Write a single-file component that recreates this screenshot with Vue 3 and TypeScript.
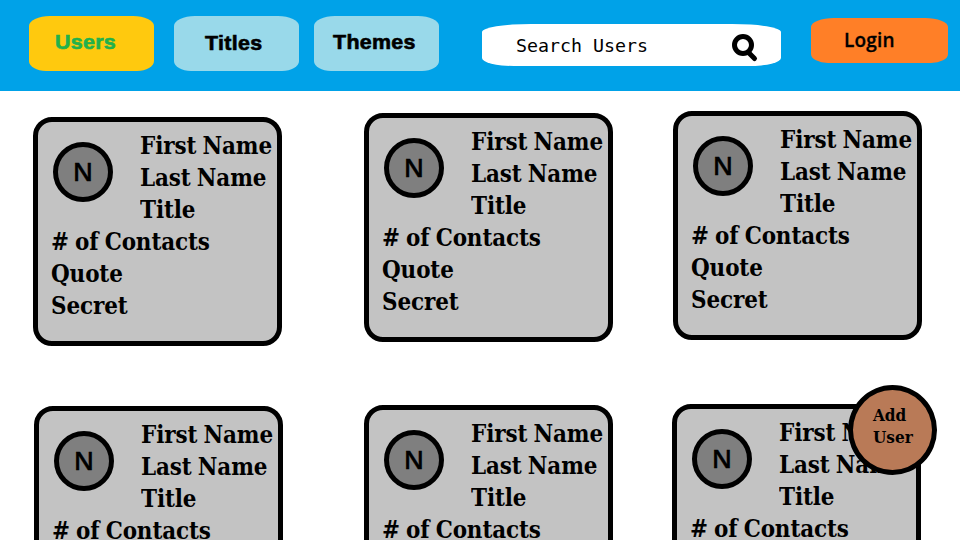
<script setup lang="ts">
interface Tab { label: string; kind: string }

const tabs: Tab[] = [
  { label: 'Users', kind: 'users' },
  { label: 'Titles', kind: 'titles' },
  { label: 'Themes', kind: 'themes' },
]
const columns: string[][] = [['a', 'd'], ['b', 'e'], ['c', 'f']]
const nameLines: string[] = ['First Name', 'Last Name', 'Title']
const detailLines: string[] = ['# of Contacts', 'Quote', 'Secret']
</script>

<template>
  <div class="screen">
    <header class="bar">
      <nav class="tabs">
        <button v-for="tab in tabs" :key="tab.kind" class="tab" :class="tab.kind">
          <span>{{ tab.label }}</span>
        </button>
      </nav>
      <div class="search">
        <span class="placeholder">Search Users</span>
        <svg class="glass" width="27" height="29" viewBox="0 0 27 29">
          <path d="M16.5 18.5 L22.5 24.5" />
          <circle cx="11" cy="11" r="8.5" />
        </svg>
      </div>
      <button class="login"><span>Login</span></button>
    </header>
    <main class="board">
      <div v-for="(column, i) in columns" :key="i" class="column">
        <article v-for="id in column" :key="id" class="card" :class="'card-' + id">
          <div class="top">
            <div class="avatar"><span>N</span></div>
            <div class="lines">
              <div v-for="line in nameLines" :key="line" class="line">{{ line }}</div>
            </div>
          </div>
          <div class="lines">
            <div v-for="line in detailLines" :key="line" class="line">{{ line }}</div>
          </div>
        </article>
      </div>
    </main>
    <button class="add"><span>Add<br />User</span></button>
  </div>
</template>

<style>
body { margin: 0; overflow: hidden; }
</style>

<style scoped>
.screen {
  position: relative;
  width: 960px;
  height: 540px;
  overflow: hidden;
  background: #fff;
  color: #000;
}
button { border: 0; padding: 0; margin: 0; color: inherit; text-align: left; }
.bar {
  box-sizing: border-box;
  height: 91px;
  padding: 16px 12px 0 29px;
  display: flex;
  align-items: flex-start;
  background: #00a2e8;
}
.tabs { display: flex; }
.tab {
  box-sizing: border-box;
  display: flex;
  width: 125px;
  height: 55px;
  border-radius: 21px 21px 17px 17px / 10px;
  background: #99d9ea;
  font: bold 20px/24px "Liberation Sans", sans-serif;
  letter-spacing: 0.3px;
  -webkit-text-stroke: 0.6px currentColor;
}
.tab span { white-space: nowrap; transform: scaleX(1.07); transform-origin: 0 50%; }
.users { background: #ffc90e; color: #22b14c; padding: 14px 0 0 25.5px; }
.titles { margin-left: 20px; padding: 15px 0 0 31px; }
.themes { margin-left: 15px; padding: 14px 0 0 19px; }
.search {
  box-sizing: border-box;
  display: flex;
  justify-content: space-between;
  width: 299px;
  height: 42px;
  margin: 8px 0 0 43px;
  padding: 10px 22px 0 34px;
  border-radius: 49px 49px 32px 32px / 8px;
  background: #fff;
}
.placeholder {
  font: 18.3px/24px "DejaVu Sans Mono", monospace;
  white-space: nowrap;
}
.glass { fill: none; stroke: #000; stroke-width: 5; stroke-linecap: round; }
.login {
  display: flex;
  box-sizing: border-box;
  width: 137px;
  height: 45px;
  margin: 2px 0 0 30px;
  padding: 10px 0 0 33px;
  border-radius: 23px 23px 17px 17px / 9px;
  background: #ff7f27;
  font: 600 19px/24px "Open Sans", sans-serif;
  letter-spacing: 0.2px;
  -webkit-text-stroke: 0.3px currentColor;
}
.board { display: flex; padding-left: 33px; }
.column { width: 249px; flex: none; }
.column + .column { margin-left: 82px; }
.column:last-child { margin-left: 60px; }
.card {
  box-sizing: border-box;
  width: 249px;
  height: 229px;
  padding: 8px 0 0 12.5px;
  border: 5px solid #000;
  border-radius: 19px;
  background: #c3c3c3;
}
.card-a { margin-top: 26px; }
.card-b { margin-top: 22px; }
.card-c { margin-top: 20px; }
.card-d { margin: 60px 0 0 1px; }
.card-e { margin-top: 63px; }
.card-f { margin: 64px 0 0 -1px; }
.top { display: flex; align-items: flex-start; }
.avatar {
  box-sizing: border-box;
  display: flex;
  align-items: center;
  justify-content: center;
  flex: none;
  width: 60px;
  height: 60px;
  margin: 12px 27px 0 2.5px;
  padding-bottom: 3px;
  border: 5px solid #000;
  border-radius: 50%;
  background: #7f7f7f;
  font: 600 26px/30px "Open Sans", sans-serif;
  -webkit-text-stroke: 0.3px currentColor;
}
.line {
  height: 32px;
  font: bold 24px/32px "DejaVu Serif Condensed", "DejaVu Serif", serif;
  letter-spacing: -0.1px;
  word-spacing: -1.2px;
  white-space: nowrap;
  transform: scaleX(0.995);
  transform-origin: 0 50%;
}
.add {
  position: absolute;
  left: 848px;
  top: 385px;
  display: flex;
  box-sizing: border-box;
  width: 89px;
  height: 90px;
  padding: 14px 0 0 20px;
  border: 5px solid #000;
  border-radius: 50%;
  background: #b97a57;
  font: bold 17px/22px "DejaVu Serif Condensed", "DejaVu Serif", serif;
}
</style>
